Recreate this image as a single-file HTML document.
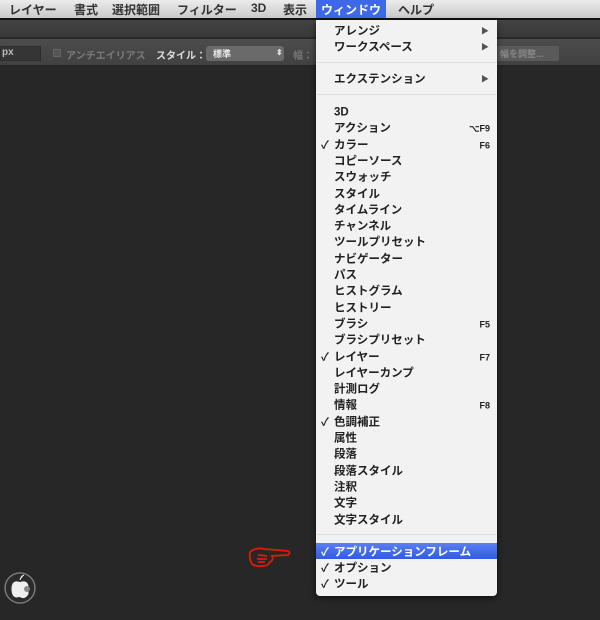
<!DOCTYPE html>
<html><head><meta charset="utf-8"><style>
*{margin:0;padding:0;box-sizing:border-box}
body{width:600px;height:620px;background:#272727;position:relative;overflow:hidden;font-family:"Liberation Sans","Noto Sans CJK JP",sans-serif;font-weight:bold}
.mb{position:absolute;left:0;top:0;width:600px;height:18px;background:linear-gradient(#ececec,#c9c9c9);font-size:12px;color:#333}
.mb span{position:absolute;top:1px}
.bl{position:absolute;top:18px;left:0;width:600px;height:2px;background:#111}
.tb{position:absolute;top:20px;left:0;width:600px;height:18px;background:linear-gradient(#434343,#383838);border-bottom:1px solid #2a2a2a}
.ob{position:absolute;top:39px;left:0;width:600px;height:27px;background:linear-gradient(#4c4c4c,#414141);border-bottom:1px solid #222;font-size:10px;color:#8a8a8a}
.ob span{position:absolute;top:8px}
.menu{position:absolute;left:316px;top:20px;width:181px;height:576px;background:#f2f2f2;border-radius:0 0 4px 4px;box-shadow:0 2px 6px rgba(0,0,0,.6);font-size:11.5px;color:#222}
.it,.ck,.sc,.ar{transform:translateY(1.5px)}
.it{position:absolute;left:18px;height:16px;line-height:16px;white-space:nowrap}
.ck{position:absolute;left:5px;font-size:11px}
.sc{position:absolute;right:7px;font-size:9px;height:16px;line-height:16px}
.ar{position:absolute;right:8px;font-size:8px;color:#555;height:16px;line-height:16px}
.sep{position:absolute;left:1px;width:179px;height:1px;background:#dcdcdc}
.hl{position:absolute;left:0;width:181px;height:16px;background:linear-gradient(#5a7ff0,#2f5be6)}
</style></head><body>
<div class="mb">
<span style="left:9px">レイヤー</span><span style="left:74px">書式</span><span style="left:112px">選択範囲</span><span style="left:177px">フィルター</span><span style="left:251px">3D</span><span style="left:283px">表示</span>
<span style="left:316px;top:0;height:18px;width:70px;background:#3d68e8;color:#fff;padding:1px 0 0 5px">ウィンドウ</span>
<span style="left:398px">ヘルプ</span>
</div>
<div class="bl"></div>
<div class="tb"></div>
<div class="ob">
<div style="position:absolute;left:0;top:7px;width:41px;height:15px;background:#353535;border:1px solid #2c2c2c"></div>
<span style="left:2px;color:#bbb">px</span>
<div style="position:absolute;left:53px;top:10px;width:8px;height:8px;border:1px solid #666;background:#555"></div>
<span style="left:66px;color:#7a7a7a">アンチエイリアス</span>
<span style="left:156px;color:#ddd">スタイル：</span>
<div style="position:absolute;left:206px;top:7px;width:78px;height:15px;background:#6a6a6a;border-radius:3px"></div>
<span style="left:213px;color:#eee;font-size:9px">標準</span>
<span style="left:276px;color:#ddd;font-size:8px;top:9px">⬍</span>
<span style="left:293px;color:#777">幅：</span>
<div style="position:absolute;left:497px;top:7px;width:62px;height:15px;background:#5a5a5a;border-radius:2px"></div>
<span style="left:500px;color:#888;font-size:9px">幅を調整...</span>
</div>
<div class="menu">
<div class="it" style="top:2px">アレンジ</div><div class="ar" style="top:2px">▶</div>
<div class="it" style="top:18px">ワークスペース</div><div class="ar" style="top:18px">▶</div>
<div class="sep" style="top:42px"></div>
<div class="it" style="top:50px">エクステンション</div><div class="ar" style="top:50px">▶</div>
<div class="sep" style="top:74px"></div>
<div class="it" style="top:83px">3D</div>
<div class="it" style="top:99.3px">アクション</div><div class="sc" style="top:99.3px">⌥F9</div>
<div class="ck" style="top:115.6px;line-height:16px">✓</div><div class="it" style="top:115.6px">カラー</div><div class="sc" style="top:115.6px">F6</div>
<div class="it" style="top:131.9px">コピーソース</div>
<div class="it" style="top:148.2px">スウォッチ</div>
<div class="it" style="top:164.5px">スタイル</div>
<div class="it" style="top:180.8px">タイムライン</div>
<div class="it" style="top:197.1px">チャンネル</div>
<div class="it" style="top:213.4px">ツールプリセット</div>
<div class="it" style="top:229.7px">ナビゲーター</div>
<div class="it" style="top:246px">パス</div>
<div class="it" style="top:262.3px">ヒストグラム</div>
<div class="it" style="top:278.6px">ヒストリー</div>
<div class="it" style="top:294.9px">ブラシ</div><div class="sc" style="top:294.9px">F5</div>
<div class="it" style="top:311.2px">ブラシプリセット</div>
<div class="ck" style="top:327.5px;line-height:16px">✓</div><div class="it" style="top:327.5px">レイヤー</div><div class="sc" style="top:327.5px">F7</div>
<div class="it" style="top:343.8px">レイヤーカンプ</div>
<div class="it" style="top:360.1px">計測ログ</div>
<div class="it" style="top:376.4px">情報</div><div class="sc" style="top:376.4px">F8</div>
<div class="ck" style="top:392.7px;line-height:16px">✓</div><div class="it" style="top:392.7px">色調補正</div>
<div class="it" style="top:409px">属性</div>
<div class="it" style="top:425.3px">段落</div>
<div class="it" style="top:441.6px">段落スタイル</div>
<div class="it" style="top:457.9px">注釈</div>
<div class="it" style="top:474.2px">文字</div>
<div class="it" style="top:490.5px">文字スタイル</div>
<div class="sep" style="top:514px"></div>
<div class="hl" style="top:523px"></div>
<div class="ck" style="top:523px;line-height:16px;color:#fff">✓</div><div class="it" style="top:523px;color:#fff">アプリケーションフレーム</div>
<div class="ck" style="top:539px;line-height:16px">✓</div><div class="it" style="top:539px">オプション</div>
<div class="ck" style="top:555px;line-height:16px">✓</div><div class="it" style="top:555px">ツール</div>
</div>
<svg style="position:absolute;left:248px;top:544px" width="44" height="28" viewBox="0 0 44 28"><path d="M2 8 Q8 3 16 5 L40 7 Q43 9 40 11 L24 12 Q26 16 22 18 Q20 22 15 22 Q8 23 4 20 Q1 15 2 8Z M10 11 L19 12 M9 15 L19 15 M10 18 L17 18" fill="none" stroke="#e01a0a" stroke-width="1.8"/></svg>
<svg style="position:absolute;left:3px;top:570px" width="36" height="36" viewBox="0 0 36 36"><circle cx="17" cy="18" r="15" fill="#2a2a2a" stroke="#777" stroke-width="1.5"/><path d="M17 10 Q18 6 21 5 M9 19 Q9 11 15 12 Q17 13 19 12 Q24 11 25 16 L25 24 Q22 29 18 27 Q16 26 14 27 Q9 27 9 19Z" fill="#eee" stroke="#eee"/><circle cx="24" cy="19" r="3" fill="#888"/></svg>
</body></html>
